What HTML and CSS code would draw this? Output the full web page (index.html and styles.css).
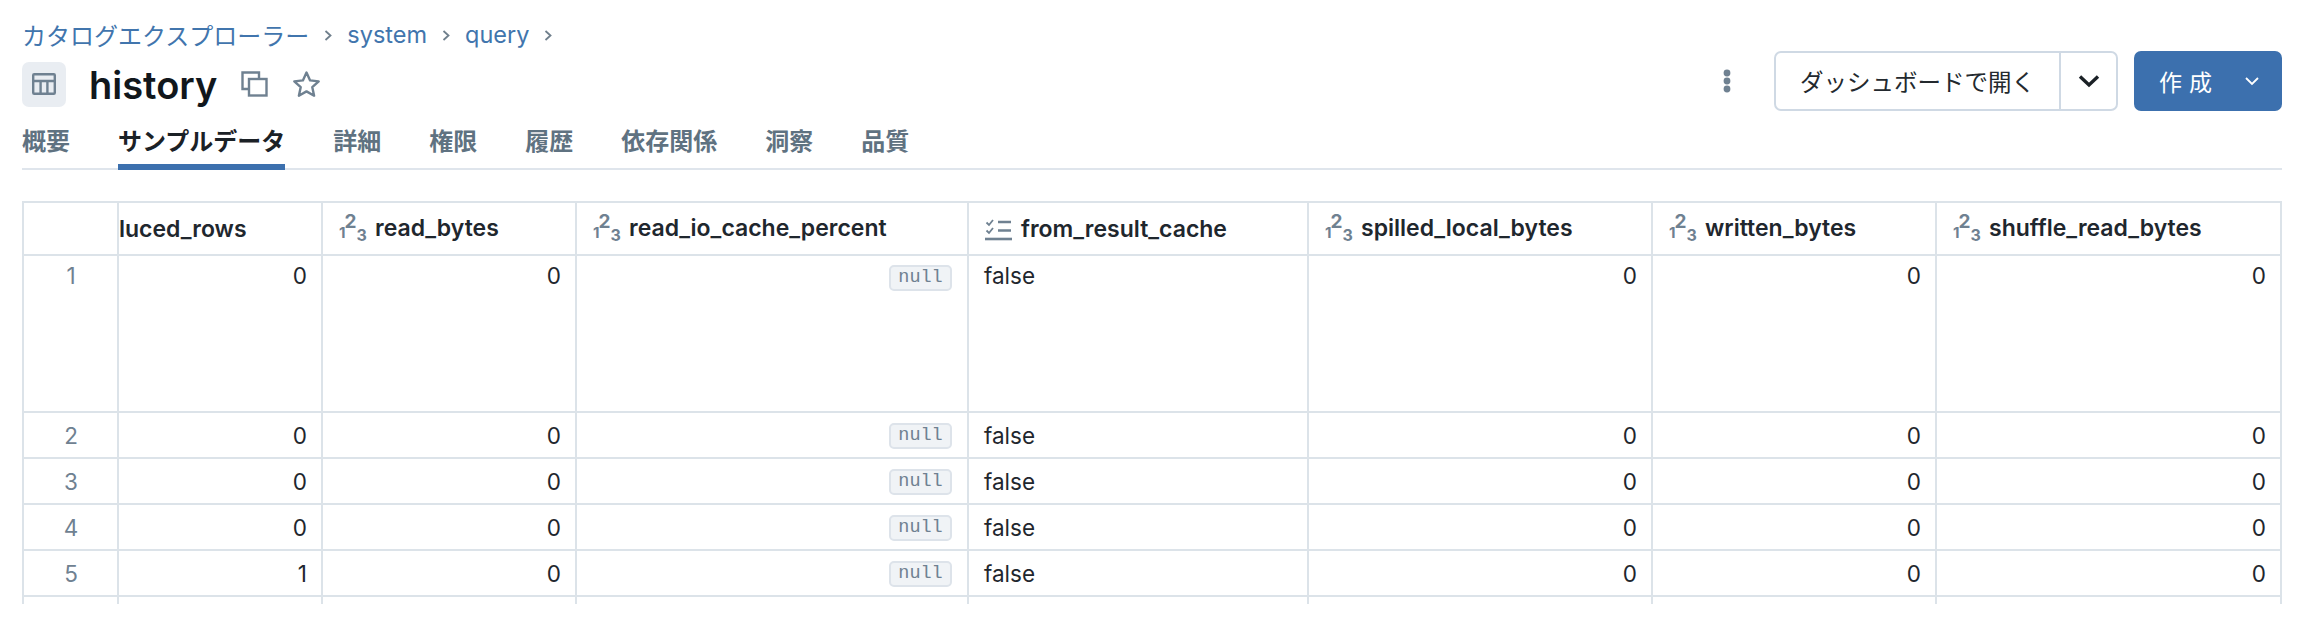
FILE: index.html
```html
<!DOCTYPE html>
<html lang="ja">
<head>
<meta charset="utf-8">
<title>history</title>
<link rel="stylesheet" href="styles.css">
</head>
<body>
<div class="page">
  <nav class="crumbs">
    <a class="link">カタログエクスプローラー</a>
    <svg class="sep" viewBox="0 0 8 11"><path d="M1.500 1 L6.500 5.500 L1.500 10" fill="none" stroke="#6f7f8c" stroke-width="1.800"/></svg>
    <a class="link latin">system</a>
    <svg class="sep" viewBox="0 0 8 11"><path d="M1.500 1 L6.500 5.500 L1.500 10" fill="none" stroke="#6f7f8c" stroke-width="1.800"/></svg>
    <a class="link latin">query</a>
    <svg class="sep" viewBox="0 0 8 11"><path d="M1.500 1 L6.500 5.500 L1.500 10" fill="none" stroke="#6f7f8c" stroke-width="1.800"/></svg>
  </nav>
  <header class="title-row">
    <div class="title-left">
      <span class="type-box">
        <svg width="24" height="22" viewBox="0 0 24 22" fill="none" stroke="#6f8191" stroke-width="2.400"><rect x="1.200" y="1.200" width="21.600" height="19.600" rx="1"/><path d="M1 8h22M8.600 8v13M15.400 8v13"/></svg>
      </span>
      <h1 class="title">history</h1>
      <svg class="copy" width="27" height="26" viewBox="0 0 27 26" fill="none" stroke="#6f8191" stroke-width="2.400"><path d="M8 18H1.500V1.500H18V8"/><rect x="8" y="8" width="17.500" height="16.500"/></svg>
      <svg class="star" width="29" height="28" viewBox="0 0 29 28" fill="none" stroke="#6f8191" stroke-width="2.400" stroke-linejoin="round"><path d="M14.500 2.500l3.600 7.900 8.600 1-6.400 5.800 1.800 8.500-7.600-4.300-7.600 4.300 1.800-8.500-6.400-5.800 8.600-1z"/></svg>
    </div>
    <div class="actions">
      <svg class="kebab" width="8" height="24" viewBox="0 0 8 24" fill="#6f8191"><circle cx="4" cy="4" r="3.400"/><circle cx="4" cy="12" r="3.400"/><circle cx="4" cy="20" r="3.400"/></svg>
      <div class="split">
        <span class="split-main">ダッシュボードで開く</span>
        <span class="split-arrow"><svg width="22" height="14" viewBox="0 0 22 14" fill="none" stroke="#1b2126" stroke-width="3.400"><path d="M2 2.500l9 8.500 9-8.500"/></svg></span>
      </div>
      <button class="create"><span class="create-label">作成</span><svg width="14" height="9" viewBox="0 0 14 9" fill="none" stroke="#fff" stroke-width="1.800"><path d="M1 1l6 6 6-6"/></svg></button>
    </div>
  </header>
  <div class="tabs">
    <span class="tab">概要</span>
    <span class="tab active">サンプルデータ</span>
    <span class="tab">詳細</span>
    <span class="tab">権限</span>
    <span class="tab">履歴</span>
    <span class="tab">依存関係</span>
    <span class="tab">洞察</span>
    <span class="tab">品質</span>
  </div>
  <div class="grid-wrap">
    <table class="grid">
      <colgroup>
        <col class="c0"><col class="c1"><col class="c2"><col class="c3"><col class="c4"><col class="c5"><col class="c6"><col class="c7">
      </colgroup>
      <thead>
        <tr>
          <th></th>
          <th class="clipped">luced_rows</th>
          <th><span class="num"><span class="d1">1</span><span class="d2">2</span><span class="d3">3</span></span>read_bytes</th>
          <th><span class="num"><span class="d1">1</span><span class="d2">2</span><span class="d3">3</span></span>read_io_cache_percent</th>
          <th><svg class="ty" viewBox="0 0 27 22" fill="none" stroke="#6f8191"><path d="M1.500 4l2.500 2.500L8 1.500M1.500 12l2.500 2.500L8 9.500" stroke-width="1.800"/><path d="M13 3.500h13M13 12h13" stroke-width="2.400"/><path d="M0 20.500h27" stroke-width="2.600"/></svg>from_result_cache</th>
          <th><span class="num"><span class="d1">1</span><span class="d2">2</span><span class="d3">3</span></span>spilled_local_bytes</th>
          <th><span class="num"><span class="d1">1</span><span class="d2">2</span><span class="d3">3</span></span>written_bytes</th>
          <th><span class="num"><span class="d1">1</span><span class="d2">2</span><span class="d3">3</span></span>shuffle_read_bytes</th>
        </tr>
      </thead>
      <tbody>
        <tr class="tall"><td class="idx">1</td><td class="r">0</td><td class="r">0</td><td class="r"><span class="null">null</span></td><td>false</td><td class="r">0</td><td class="r">0</td><td class="r">0</td></tr>
        <tr><td class="idx">2</td><td class="r">0</td><td class="r">0</td><td class="r"><span class="null">null</span></td><td>false</td><td class="r">0</td><td class="r">0</td><td class="r">0</td></tr>
        <tr><td class="idx">3</td><td class="r">0</td><td class="r">0</td><td class="r"><span class="null">null</span></td><td>false</td><td class="r">0</td><td class="r">0</td><td class="r">0</td></tr>
        <tr><td class="idx">4</td><td class="r">0</td><td class="r">0</td><td class="r"><span class="null">null</span></td><td>false</td><td class="r">0</td><td class="r">0</td><td class="r">0</td></tr>
        <tr><td class="idx">5</td><td class="r">1</td><td class="r">0</td><td class="r"><span class="null">null</span></td><td>false</td><td class="r">0</td><td class="r">0</td><td class="r">0</td></tr>
        <tr><td></td><td></td><td></td><td></td><td></td><td></td><td></td><td></td></tr>
      </tbody>
    </table>
  </div>
</div>
</body>
</html>
```
FILE: styles.css
```css
* { box-sizing: border-box; }
html, body { margin: 0; height: 100%; background: #fff; overflow: hidden; }
body { font-family: Inter, "Noto Sans CJK JP", sans-serif; color: #1f272e; }

.page { padding: 18px 28px 0 22px; }

.crumbs { display: flex; align-items: center; height: 33px; font-size: 24px; }
.link { color: #4175ad; }
.latin { font-size: 23.500px; }
.sep { width: 8px; height: 11px; margin: 1px 15px 0 15px; }

.title-row { display: flex; align-items: center; justify-content: space-between; height: 60px; }
.title-left { display: flex; align-items: center; margin-top: 6px; }
.type-box { display: flex; align-items: center; justify-content: center; width: 44px; height: 45px; background: #e9edf2; border-radius: 7px; }
.title { margin: 2px 0 0 23px; font-size: 38px; font-weight: 600; line-height: 45px; color: #11171c; }
.copy { margin-left: 24px; }
.star { margin-left: 24px; }

.actions { display: flex; align-items: center; }
.kebab { margin-right: 43px; }
.split { display: flex; height: 60px; border: 2px solid #cfd9e4; border-radius: 7px; font-size: 23.500px; }
.split-main { display: flex; align-items: center; justify-content: center; width: 285px; border-right: 2px solid #cfd9e4; color: #23292e; }
.split-arrow { display: flex; align-items: center; justify-content: center; width: 55px; }
.create { display: flex; align-items: center; justify-content: space-between; width: 148px; height: 60px; margin-left: 16px; padding: 0 23px 0 25px; border: 0; border-radius: 7px; background: #3c70ae; color: #fff; font: inherit; font-size: 23px; }
.create-label { letter-spacing: 7px; }

.tabs { display: flex; gap: 48px; height: 59px; border-bottom: 2px solid #dfe5ec; }
.tab { height: 59px; padding-top: 14px; border-bottom: 6px solid transparent; font-size: 24px; font-weight: 600; line-height: 34px; color: #5f7281; white-space: nowrap; }
.tab.active { color: #1b2126; border-bottom-color: #3c70ae; }

.grid-wrap { height: 403px; margin-top: 31px; overflow: hidden; }
.grid { width: 2260px; table-layout: fixed; border-collapse: separate; border-spacing: 0; border-top: 2px solid #dce3e9; border-left: 2px solid #dce3e9; font-size: 22.500px; }
.c0 { width: 95px; } .c1 { width: 204px; } .c2 { width: 254px; } .c3 { width: 392px; }
.c4 { width: 340px; } .c5 { width: 344px; } .c6 { width: 284px; } .c7 { width: 345px; }
.grid th, .grid td { border-right: 2px solid #dce3e9; border-bottom: 2px solid #dce3e9; }
.grid th { height: 53px; padding: 0 0 0 16px; text-align: left; font-size: 23px; font-weight: 600; color: #1f272e; white-space: nowrap; overflow: hidden; }
.grid th.clipped { padding-left: 0; }
.num { display: inline-flex; width: 27px; height: 26px; margin-right: 9px; vertical-align: middle; font-weight: 700; line-height: 15px; color: #6f8191; }
.d1 { align-self: center; font-size: 15px; margin-top: 5px; }
.d2 { align-self: flex-start; font-size: 19px; margin: -3px 0 0 -1px; }
.d3 { align-self: flex-end; font-size: 16px; }
.ty { width: 27px; height: 25px; margin-right: 9px; vertical-align: -5px; }
.grid td { height: 46px; padding: 0 14px 0 15px; vertical-align: middle; }
.tall td { height: 157px; padding-top: 6px; vertical-align: top; }
.idx { text-align: center; color: #6f8191; }
.r { text-align: right; }
.null { display: inline-block; width: 63px; height: 26px; margin-right: 1px; border: 2px solid #dde3ea; border-radius: 5px; background: #f0f3f6; font-family: "Liberation Mono", monospace; font-size: 18.500px; line-height: 22px; text-align: center; color: #6f8191; vertical-align: middle; }
```
